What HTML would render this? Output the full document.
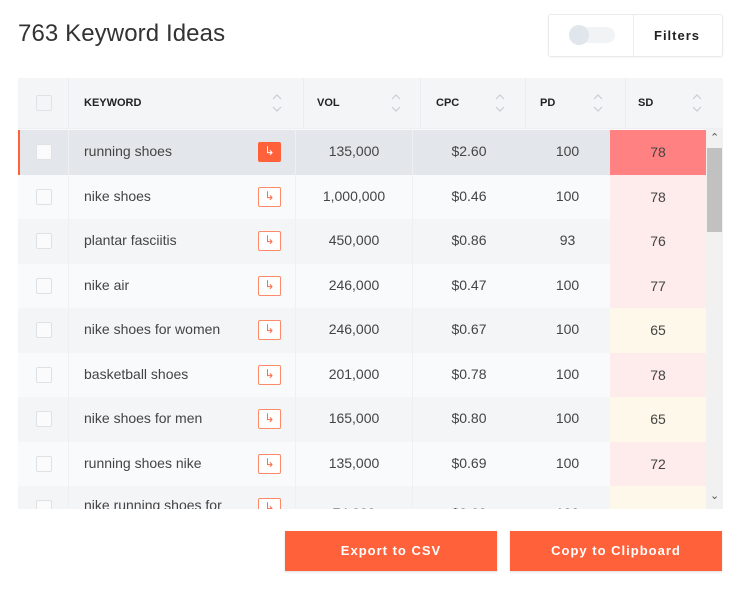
<!DOCTYPE html>
<html><head><meta charset="utf-8"><style>
*{box-sizing:border-box;margin:0;padding:0}
body{width:755px;height:591px;background:#fff;font-family:"Liberation Sans",sans-serif;color:#333;position:relative;overflow:hidden}
.title{position:absolute;left:18px;top:20px;font-size:24px;color:#333;letter-spacing:0.1px}
.filt{position:absolute;left:548px;top:14px;width:175px;height:43px;border:1px solid #e8eaed;border-radius:3px;box-shadow:0 1px 2px rgba(0,0,0,.04)}
.filt .sep{position:absolute;left:84px;top:0;bottom:0;border-left:1px solid #eceef0}
.tg{position:absolute;left:20px;top:12px;width:46px;height:16px;border-radius:8px;background:#f1f3f5}
.tg:before{content:"";position:absolute;left:0;top:-2px;width:20px;height:20px;border-radius:50%;background:#e1e6ec}
.filt b{position:absolute;left:105px;top:13px;font-size:13px;letter-spacing:1px;color:#222}
.tbl{position:absolute;left:18px;top:78px;width:705px;height:431px;overflow:hidden;background:#f9fafb}
.hd{position:absolute;left:0;top:0;width:705px;height:51px;background:#f4f5f7;border-bottom:1px solid #eceef1}
.hd span{position:absolute;top:19px;font-size:11px;font-weight:bold;color:#222}
.hd i{position:absolute;top:0;bottom:0;border-left:1px solid #eaecef}
.ar{position:absolute;top:14px;width:10px;height:22px}
.row{position:absolute;left:0;width:688px;height:45px;font-size:14px;color:#444}
.row .cb{position:absolute;left:18px;top:14px;width:16px;height:16px;border:1px solid #dfe2e5;border-radius:2px;background:#fbfbfc}
.row .kw{position:absolute;left:66px;top:13px}
.row .ic{position:absolute;left:240px;top:12px;width:23px;height:20px;border:1.5px solid #ff8a6a;border-radius:2px;color:#ff6a48;font-size:12px;text-align:center;line-height:16px;background:#fff}
.row .c{position:absolute;top:13px;text-align:center}
.row .sd{position:absolute;left:592px;top:0;width:96px;height:45px;text-align:center;line-height:45px}
.row .v{position:absolute;left:277px;top:0;bottom:0;width:118px;border-left:1px solid #eef0f2;border-right:1px solid #eef0f2}
.row .k{position:absolute;left:50px;top:0;bottom:0;border-left:1px solid #eef0f2}
.sb{position:absolute;left:688px;top:51px;width:17px;height:380px;background:#f1f1f1}
.sb .th{position:absolute;left:1px;top:19px;width:15px;height:84px;background:#c1c1c1}
.btn{position:absolute;top:531px;height:40px;background:#ff623b;color:#fff;font-weight:bold;font-size:13px;letter-spacing:1px;text-align:center;line-height:40px;box-shadow:0 1px 2px rgba(0,0,0,.15)}
</style></head><body>
<div class="title">763 Keyword Ideas</div>
<div class="filt"><div class="tg"></div><div class="sep"></div><b>Filters</b></div>
<div class="tbl">
<div class="hd">
<div style="position:absolute;left:18px;top:17px;width:16px;height:16px;border:1px solid #dfe2e5;border-radius:2px"></div>
<i style="left:50px"></i><i style="left:285px"></i><i style="left:402px"></i><i style="left:507px"></i><i style="left:607px"></i>
<span style="left:66px">KEYWORD</span><span style="left:299px">VOL</span><span style="left:418px">CPC</span><span style="left:522px">PD</span><span style="left:620px">SD</span>
<svg class="ar" style="left:254px" viewBox="0 0 10 22"><path d="M1 7l4-4 4 4M1 15l4 4 4-4" fill="none" stroke="#c9ccd1" stroke-width="1.2"/></svg>
<svg class="ar" style="left:373px" viewBox="0 0 10 22"><path d="M1 7l4-4 4 4M1 15l4 4 4-4" fill="none" stroke="#c9ccd1" stroke-width="1.2"/></svg>
<svg class="ar" style="left:477px" viewBox="0 0 10 22"><path d="M1 7l4-4 4 4M1 15l4 4 4-4" fill="none" stroke="#c9ccd1" stroke-width="1.2"/></svg>
<svg class="ar" style="left:575px" viewBox="0 0 10 22"><path d="M1 7l4-4 4 4M1 15l4 4 4-4" fill="none" stroke="#c9ccd1" stroke-width="1.2"/></svg>
<svg class="ar" style="left:674px" viewBox="0 0 10 22"><path d="M1 7l4-4 4 4M1 15l4 4 4-4" fill="none" stroke="#c9ccd1" stroke-width="1.2"/></svg>
</div>

<div class="row" style="top:52px;background:#e3e7eb;box-shadow:inset 2px 0 0 #ff623b"><div class="k"></div><div class="v"></div><div class="cb"></div><div class="kw">running shoes</div><div class="ic" style="background:#ff623b;color:#fff;border-color:#ff623b">↳</div><div class="c" style="left:277px;width:118px">135,000</div><div class="c" style="left:395px;width:112px">$2.60</div><div class="c" style="left:507px;width:85px">100</div><div class="sd" style="background:#ff8181">78</div></div>
<div class="row" style="top:97px;background:#f9fafb"><div class="k"></div><div class="v"></div><div class="cb"></div><div class="kw">nike shoes</div><div class="ic">↳</div><div class="c" style="left:277px;width:118px">1,000,000</div><div class="c" style="left:395px;width:112px">$0.46</div><div class="c" style="left:507px;width:85px">100</div><div class="sd" style="background:#feebeb">78</div></div>
<div class="row" style="top:141px;background:#f4f5f7"><div class="k"></div><div class="v"></div><div class="cb"></div><div class="kw">plantar fasciitis</div><div class="ic">↳</div><div class="c" style="left:277px;width:118px">450,000</div><div class="c" style="left:395px;width:112px">$0.86</div><div class="c" style="left:507px;width:85px">93</div><div class="sd" style="background:#feebeb">76</div></div>
<div class="row" style="top:186px;background:#f9fafb"><div class="k"></div><div class="v"></div><div class="cb"></div><div class="kw">nike air</div><div class="ic">↳</div><div class="c" style="left:277px;width:118px">246,000</div><div class="c" style="left:395px;width:112px">$0.47</div><div class="c" style="left:507px;width:85px">100</div><div class="sd" style="background:#feebeb">77</div></div>
<div class="row" style="top:230px;background:#f4f5f7"><div class="k"></div><div class="v"></div><div class="cb"></div><div class="kw">nike shoes for women</div><div class="ic">↳</div><div class="c" style="left:277px;width:118px">246,000</div><div class="c" style="left:395px;width:112px">$0.67</div><div class="c" style="left:507px;width:85px">100</div><div class="sd" style="background:#fef8ea">65</div></div>
<div class="row" style="top:275px;background:#f9fafb"><div class="k"></div><div class="v"></div><div class="cb"></div><div class="kw">basketball shoes</div><div class="ic">↳</div><div class="c" style="left:277px;width:118px">201,000</div><div class="c" style="left:395px;width:112px">$0.78</div><div class="c" style="left:507px;width:85px">100</div><div class="sd" style="background:#feebeb">78</div></div>
<div class="row" style="top:319px;background:#f4f5f7"><div class="k"></div><div class="v"></div><div class="cb"></div><div class="kw">nike shoes for men</div><div class="ic">↳</div><div class="c" style="left:277px;width:118px">165,000</div><div class="c" style="left:395px;width:112px">$0.80</div><div class="c" style="left:507px;width:85px">100</div><div class="sd" style="background:#fef8ea">65</div></div>
<div class="row" style="top:364px;background:#f9fafb"><div class="k"></div><div class="v"></div><div class="cb"></div><div class="kw">running shoes nike</div><div class="ic">↳</div><div class="c" style="left:277px;width:118px">135,000</div><div class="c" style="left:395px;width:112px">$0.69</div><div class="c" style="left:507px;width:85px">100</div><div class="sd" style="background:#feebeb">72</div></div>
<div class="row" style="top:408px;background:#f4f5f7"><div class="k"></div><div class="v"></div><div class="cb"></div><div class="kw" style="top:11px">nike running shoes for</div><div class="ic">↳</div><div class="c" style="left:277px;width:118px;top:19px">74,000</div><div class="c" style="left:395px;width:112px;top:19px">$0.60</div><div class="c" style="left:507px;width:85px;top:19px">100</div><div class="sd" style="background:#fef8ea;line-height:58px">65</div></div>
<div class="sb"><div style="position:absolute;left:4px;top:2px;font-size:11px;color:#555">&#8963;</div><div class="th"></div><div style="position:absolute;left:4px;top:360px;font-size:11px;color:#555">&#8964;</div></div>
</div>
<div class="btn" style="left:285px;width:212px">Export to CSV</div>
<div class="btn" style="left:510px;width:212px">Copy to Clipboard</div>
</body></html>
